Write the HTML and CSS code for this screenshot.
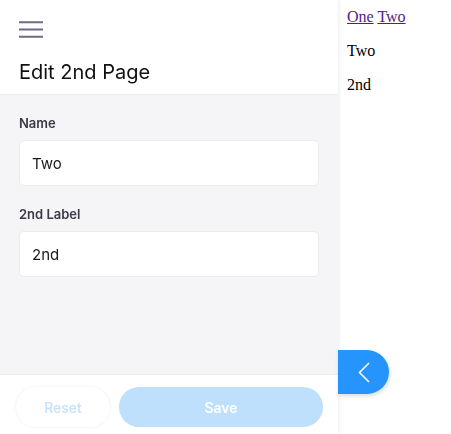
FILE: index.html
```html
<!DOCTYPE html>
<html>
<head>
<meta charset="utf-8">
<link rel="stylesheet" href="styles.css">
</head>
<body>
<div class="page">
  <a href="#">One</a> <a href="#">Two</a>
  <p>Two</p>
  <p>2nd</p>
</div>
<aside class="panel">
  <header class="head">
    <button class="menu" aria-label="menu">
      <svg width="24" height="17" viewBox="0 0 24 17"><path d="M0 1.3h24M0 8.5h24M0 15.7h24" stroke="#6f6b86" stroke-width="2"/></svg>
    </button>
    <h1 class="title">Edit 2nd Page</h1>
  </header>
  <main class="body">
    <label class="field">
      <span class="label">Name</span>
      <span class="input">Two</span>
    </label>
    <label class="field">
      <span class="label">2nd Label</span>
      <span class="input">2nd</span>
    </label>
  </main>
  <footer class="foot">
    <button class="btn reset">Reset</button>
    <button class="btn save">Save</button>
  </footer>
  <button class="fab" aria-label="collapse">
    <svg width="12" height="21" viewBox="0 0 12 21"><path d="M11 1 1.5 10.5 11 20" fill="none" stroke="#fff" stroke-width="1.6"/></svg>
  </button>
</aside>
</body>
</html>
```
FILE: styles.css
```css
html, body { margin: 0; height: 100%; }
body { font-family: "Liberation Serif", serif; font-size: 16px; }
.page { margin-left: 339px; padding: 8px; }
.page p { margin: 16px 0; }
.page a { color: #551a8b; }
.panel {
  position: fixed; left: 0; top: 0; bottom: 0; width: 338px;
  display: flex; flex-direction: column;
  font-family: Inter, "Noto Sans", sans-serif;
  background: #fff;
  box-shadow: 1px 0 4px rgba(0,0,0,0.08);
}
.head { height: 94px; flex: none; border-bottom: 1px solid #ecebf0; box-sizing: content-box; padding: 0 19px; display: flex; flex-direction: column; }
.menu { border: 0; background: none; padding: 0; margin-top: 21px; width: 24px; height: 17px; display: block; }
.menu svg { display: block; }
.title { margin: 22px 0 0; font-size: 20px; font-weight: 400; color: #111; line-height: 24px; }
.body { flex: 1; background: #f5f5f8; padding: 21px 19px 0 19px; display: flex; flex-direction: column; gap: 21px; }
.field { display: flex; flex-direction: column; gap: 9px; }
.label { font-size: 13px; font-weight: 600; color: #3a3947; line-height: 15px; }
.input { width: 300px; box-sizing: border-box; height: 46px; background: #fff; border: 1px solid #ecebf0; border-radius: 5px; padding: 0 12px; display: flex; align-items: center; font-size: 15px; color: #1a1a1a; }
.foot { height: 60px; flex: none; box-sizing: border-box; border-top: 1px solid #ecebf0; background: #fff; display: flex; align-items: flex-start; gap: 9px; padding: 12px 15px 0 16px; }
.btn { border: 0; font-family: inherit; font-size: 14px; border-radius: 20px; height: 40px; }
.reset { width: 94px; background: #fff; color: #c4e0fc; box-shadow: 0 0 3px rgba(0,0,0,0.08); font-weight: 500; }
.save { width: 204px; background: #bee0fc; color: #fff; font-weight: 600; }
.fab {
  position: absolute; left: 338px; top: 350px; width: 51px; height: 44px;
  border: 0; padding: 0 0 0 8px; background: #2595fd; border-radius: 0 22px 22px 0;
  display: flex; align-items: center; justify-content: center;
  box-shadow: 1px 2px 4px rgba(0,0,0,0.15);
}
.fab svg { display: block; margin-right: 8px; }
```
